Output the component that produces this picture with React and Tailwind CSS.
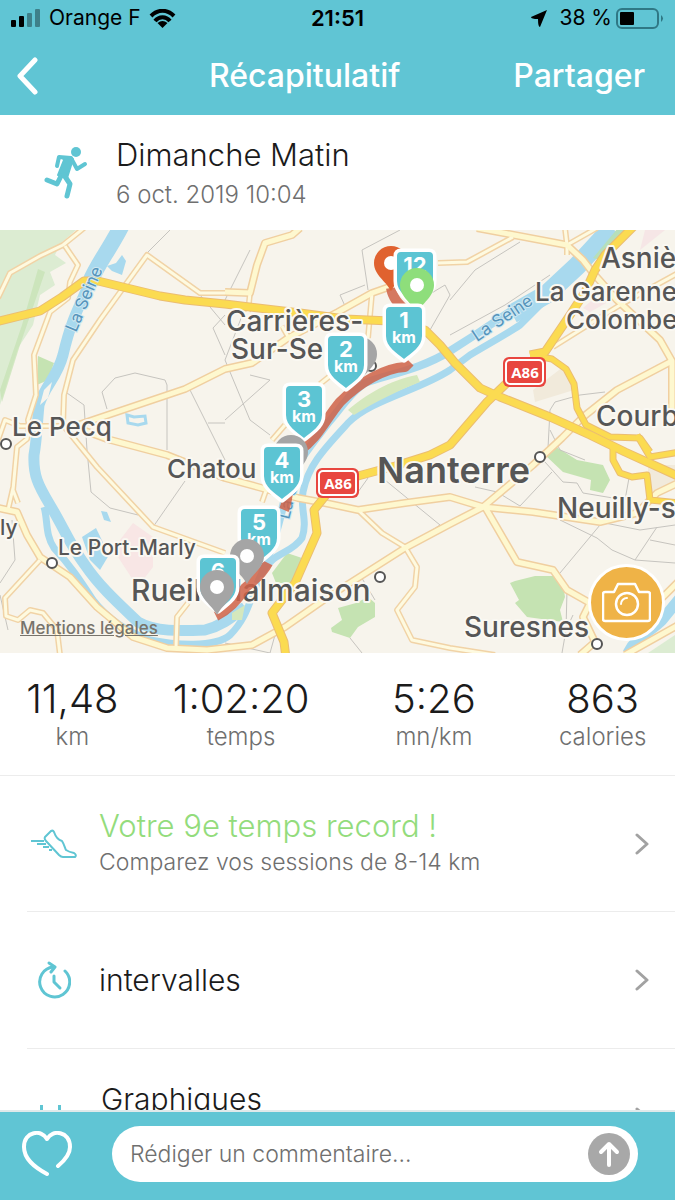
import React, { useState } from 'react';

const majorRoads = [
  'M-5 92 L40 81 L62 67 L84 51 L98 51 L160 66 L185 70 L225 74 L300 83 L345 89 L390 91 L425 100 L440 115 L455 133 L480 158 L500 167 L550 187 L590 205 L625 222 L680 247',
  'M635 -5 L605 25 L595 40 L585 62 L570 85 L545 122 L530 125',
  'M543 123 L513 147 L487 172 L450 215 L430 225 L395 236 L358 246 L330 260 L314 280 L317 303 L295 353 L272 383 L284 412 L286 428',
];

const rampRoads = [
  'M536 126 L552 129 L566 139 L574 154 L577 178 L586 195 L610 207 L640 208 L650 222',
  'M613 214 L613 230 L620 243 L632 247 L647 245 L650 270 L680 273',
  'M637 205 L650 227 L680 222',
];

const minorRoads = [
  'M-2 68 L10 43 L40 26 L63 15 L84 -2',
  'M65 16 L78 35 L70 52 L68 68 L50 82 L34 125 L36 165 L28 190 L30 200',
  'M-2 210 L5 190 L20 196 L75 196',
  'M225 63 L200 63 L147 25 L100 90 L73 130 L64 165 L63 195 L97 237 L153 297 L225 323',
  'M250 63 L248 82 M372 63 L368 108 M290 110 L282 96',
  'M40 330 L5 368 L6 386 L18 390 L30 380 L43 383 L57 400 L60 425',
  'M29 198 L27 209 L17 217 L13 260 L18 273 M13 258 L8 280',
  'M188 373 L177 387 L176 418',
  'M358 280 L382 303 L405 317 L417 337 L415 357 L397 380 L412 410 L450 418 L495 425',
  'M438 33 L467 32 L513 7 M565 -2 L567 15 L597 -2 M567 15 L567 25',
  'M553 117 L620 75 L680 42',
  'M272 210 L285 195 M320 154 L330 146 M262 272 L268 255',
];

const mainRoads = [
  'M75 196 L185 159 L225 139 L252 133 L288 108 L338 82 L372 63 L392 56',
  'M225 62 L250 63 L257 35 L265 13 L292 5 L300 -2',
  'M80 199 L107 209 L167 225 L225 248 L258 257 L298 268 L325 273 L358 280 L405 273 L450 267 L483 277 L533 282 L600 292 L637 283 L657 263 L680 252',
  'M-2 278 L17 282 L27 305 L40 327 L70 347 L97 377 L133 407 L167 418 L207 420 L252 415 L285 397 L328 367 L405 318 L450 294 L483 277 L533 235 L562 208 L583 187 L617 160 L672 131',
  'M485 277 L517 332 L553 340 L567 360 L590 373 L583 387 L595 412 L580 425',
  'M477 -2 L567 15 L583 30 L593 43 L617 70 L660 110 L672 131 L672 183',
  'M625 425 L680 394 M660 370 L680 350',
];

const footPaths = [
  'M170 0 L147 23 M200 65 L225 95 M225 85 L213 98 L225 125',
  'M107 179 L102 162 L115 148 L135 143 L165 150 L167 155 L167 220',
  'M67 163 L84 175 L87 220 L91 262 L110 278 L138 285',
  'M185 251 L153 297 M190 160 L225 230 M208 193 L225 193',
  'M225 70 L250 20 M250 65 L225 130 L250 190 L270 205 M225 190 L270 150 L250 145',
  'M362 20 L400 0 M362 20 L368 60 M365 55 L340 65 L345 76 M420 70 L445 55 L450 65 L430 100',
  'M450 70 L475 40 L520 12 M450 105 L505 75 L550 45',
  'M548 218 L550 180 L555 172 L580 165 L605 162 M550 200 L560 220 L585 230',
  'M358 262 L368 248 M385 250 L440 295 L405 318 M360 345 L375 370 M350 408 L362 423',
  'M475 257 L497 262 L520 276 L552 242 M545 232 L563 252 L577 253 L583 263 L625 270 L629 248',
  'M560 290 L597 308 L612 320 L635 330 L675 333 M600 295 L560 343 M657 297 L635 330 M600 292 L640 300 L675 295',
  'M675 315 L650 310 M567 360 L566 400 L573 385 M566 400 L562 423',
  'M12 290 L15 330 L0 353 M0 365 L8 400 M225 413 L270 423 L275 405',
];

const towns = [
  [6, 214],
  [52, 333],
  [371, 136],
  [380, 347],
  [540, 227],
  [597, 414],
];

const labels = [
  { text: 'Asniè', x: 601, y: 38, cls: 'text-[28px] font-medium' },
  { text: 'La Garenne', x: 535, y: 71, cls: 'text-[26px] font-medium' },
  { text: 'Colombe', x: 566, y: 99, cls: 'text-[26px] font-medium' },
  { text: 'Carrières-', x: 226, y: 101, cls: 'text-[28px] font-medium' },
  { text: 'Sur-Se', x: 231, y: 129, cls: 'text-[28px] font-medium' },
  { text: 'Le Pecq', x: 12, y: 206, cls: 'text-[26px] font-medium' },
  { text: 'Chatou', x: 167, y: 248, cls: 'text-[26px] font-medium' },
  { text: 'Nanterre', x: 377, y: 253, cls: 'text-[36px] font-semibold' },
  { text: 'Courb', x: 596, y: 196, cls: 'text-[28px] font-medium' },
  { text: 'Neuilly-s', x: 557, y: 288, cls: 'text-[28px] font-medium' },
  { text: 'Le Port-Marly', x: 58, y: 325, cls: 'text-[21px] font-medium' },
  { text: 'Rueil-Malmaison', x: 131, y: 371, cls: 'text-[30px] font-medium' },
  { text: 'Suresnes', x: 464, y: 407, cls: 'text-[28px] font-medium' },
];

const stats = [
  { value: '11,48', unit: 'km' },
  { value: '1:02:20', unit: 'temps' },
  { value: '5:26', unit: 'mn/km' },
  { value: '863', unit: 'calories' },
];

function KmPin({ x, y, n }) {
  return (
    <g transform={`translate(${x} ${y})`}>
      <path
        d="M-18 4 Q-18 0 -14 0 H14 Q18 0 18 4 V29 C18 40 7 46 0 52 C-7 46 -18 40 -18 29 Z"
        fill="#5cc4d3"
        stroke="#fff"
        strokeWidth="7"
        strokeLinejoin="round"
        paintOrder="stroke"
      />
      <text x="0" y="21" textAnchor="middle" fill="#fff" className="text-[22px] font-bold">{n}</text>
      <text x="0" y="36" textAnchor="middle" fill="#fff" className="text-[16px] font-bold">km</text>
    </g>
  );
}

function DropPin({ x, y, color }) {
  return (
    <g transform={`translate(${x} ${y})`}>
      <path d="M0 28 C-5 18 -17 12 -17 0 A17 17 0 0 1 17 0 C17 12 5 18 0 28 Z" fill={color} />
      <circle r="7" fill="#fff" />
    </g>
  );
}

function RoadSign({ x, y }) {
  return (
    <g transform={`translate(${x} ${y})`}>
      <rect width="43" height="30" rx="6" fill="#e8463f" />
      <rect x="3" y="3" width="37" height="24" rx="4" fill="none" stroke="#fff" strokeWidth="2" />
      <text x="22" y="21" textAnchor="middle" fill="#fff" className="font-['Open_Sans',sans-serif] text-[15px] font-bold">
        A86
      </text>
    </g>
  );
}

function RouteMap() {
  return (
    <svg viewBox="0 0 675 423" className="block w-full" role="img" aria-label="Carte du parcours">
      <rect width="675" height="423" fill="#f7f4ec" />

      {/* parcs et zones */}
      <g fill="#dcecd2">
        <path d="M0 0 H76 L60 14 L55 25 L66 33 L50 42 L55 55 L40 65 L33 95 L18 118 L0 175 Z" />
        <path d="M648 423 L675 405 V423 Z" />
      </g>
      <g fill="#c5e3b2">
        <path d="M38 39 L45 42 L32 80 L20 115 L2 172 L0 160 L22 95 Z" opacity="0.7" />
        <path d="M38 126 L54 133 L48 150 L37 155 Z" />
        <path d="M287 323 L302 328 L292 353 L276 353 L272 343 Z" />
        <path d="M338 378 L356 373 L368 367 L375 373 V387 L358 397 L350 408 L332 402 L331 398 L342 390 Z" />
        <path d="M545 225 L553 215 L577 230 L603 235 L610 250 L603 263 L590 260 L591 250 L563 242 Z" />
        <path d="M510 353 L515 351 L535 346 L555 346 L563 354 L565 367 L560 380 L563 392 L527 387 L515 373 L519 370 Z" />
      </g>
      <path d="M118 327 L120 310 L133 293 L153 307 V337 L143 350 H133 Z" fill="#f8e6e5" />
      <path d="M583 78 L597 66 L608 72 L590 82 Z M645 0 H665 L640 20 Z" fill="#f6e6e6" />
      <path d="M533 160 L563 137 L572 145 L574 160 L535 172 Z M648 235 H675 V255 L648 265 Z" fill="#f1eadb" />

      {/* sentiers */}
      <g fill="none" stroke="#c6c4bf" strokeWidth="1">
        {footPaths.map((d) => <path key={d} d={d} />)}
      </g>

      {/* la Seine */}
      <g fill="none" stroke="#a8d9ee" strokeLinejoin="round">
        <path d="M122 -5 C108 22 98 33 90 52 C75 85 70 95 63 125 C57 148 45 155 39 175 C37 195 37 208 34 225 C33 245 38 255 50 275 C65 300 70 315 85 335 C100 357 118 373 138 392 C155 402 180 401 205 400 C225 395 235 384 245 377" strokeWidth="11" />
        <path d="M122 -5 C108 22 98 33 90 52" strokeWidth="16" />
        <path d="M44 277 C48 290 45 305 54 318 C70 335 80 350 93 370 C110 392 130 403 150 410 C175 415 215 418 230 405 C250 385 250 365 262 343 C275 320 290 325 302 308 C308 290 300 280 303 262 C308 235 325 218 348 193 C370 170 420 160 450 140 L470 125 C490 113 505 105 520 95 L547 68 L580 35" strokeWidth="7" />
        <path d="M262 343 C275 310 280 290 288 255 C292 238 315 210 328 193 C340 180 350 162 365 153 C385 145 420 140 450 121 L475 105 L517 77" strokeWidth="8" />
        <path d="M512 84 L547 64 L577 36 L612 -2" strokeWidth="19" />
        <path d="M628 423 C635 408 650 402 662 390 L680 368" strokeWidth="11" />
      </g>
      <g fill="#a8d9ee">
        <path d="M107 36 L116 33 L122 25 L126 31 L122 45 L112 41 Z" />
        <path d="M101 281 L107 282 L111 292 L104 290 Z" />
        <path d="M82 307 L96 298 L109 325 L100 340 L90 330 Z" />
      </g>
      <path d="M44 160 L52 152 L48 168 L40 175 Z" fill="#f7f4ec" />
      <path d="M127 185 L134 187 L145 186 L146 193 L138 195 L128 193 Z" fill="none" stroke="#a8d9ee" strokeWidth="3" />
      <path d="M348 180 C365 165 390 150 417 145 L420 152 C395 162 375 172 354 185 Z" fill="#d5e8bd" />
      <path d="M593 28 L618 -2 H635 L600 30 Z" fill="#b6dfbb" />
      <path d="M232 383 L245 375 L242 390 H232 Z" fill="#d5e8bd" />

      {/* routes */}
      <g fill="none" strokeLinejoin="round">
        {minorRoads.map((d) => <path key={d} d={d} stroke="#f1d3a6" strokeWidth="6" />)}
        {mainRoads.map((d) => <path key={d} d={d} stroke="#f0cfa0" strokeWidth="8" />)}
        {minorRoads.map((d) => <path key={d} d={d} stroke="#fefae0" strokeWidth="3" />)}
        {mainRoads.map((d) => <path key={d} d={d} stroke="#fef8cf" strokeWidth="5" />)}
        {rampRoads.map((d) => <path key={d} d={d} stroke="#ebbd72" strokeWidth="7" />)}
        {majorRoads.map((d) => <path key={d} d={d} stroke="#ebbd72" strokeWidth="9" />)}
        {rampRoads.map((d) => <path key={d} d={d} stroke="#fbdb51" strokeWidth="5" />)}
        {majorRoads.map((d) => <path key={d} d={d} stroke="#fbdb51" strokeWidth="7" />)}
      </g>

      {towns.map(([x, y]) => (
        <circle key={x} cx={x} cy={y} r="5" fill="#fff" stroke="#555" strokeWidth="2" />
      ))}

      <g className="font-[Inter,sans-serif]" fill="#565656" stroke="#faf8f2" strokeWidth="4" strokeLinejoin="round" paintOrder="stroke">
        {labels.map((l) => <text key={l.text} x={l.x} y={l.y} className={l.cls}>{l.text}</text>)}
        <text x="0" y="305" className="text-[21px] font-medium">ly</text>
      </g>
      <g className="font-[Inter,sans-serif] text-[17px]" fill="#5594bb" stroke="#cfe8f2" strokeWidth="2" paintOrder="stroke">
        <text transform="translate(76 103) rotate(-67)">La Seine</text>
        <text transform="translate(477 112) rotate(-34)">La Seine</text>
        <text transform="translate(289 290) rotate(-76)">La S</text>
      </g>

      <RoadSign x="503" y="127" />
      <RoadSign x="316" y="238" />

      {/* parcours */}
      <g fill="none" stroke="#cf6248" strokeOpacity="0.85" strokeWidth="10" strokeLinejoin="round">
        <path d="M391 58 C393 70 400 75 410 85 M410 132 L405 137 C385 138 360 152 340 172 C325 190 318 208 300 220 C285 232 292 262 284 280" />
        <path d="M268 333 C262 345 252 352 245 358 C238 370 228 380 216 386" />
      </g>

      <g className="font-[Inter,sans-serif]">
        <DropPin x="391" y="33" color="#e0622f" />
        <KmPin x="415" y="22" n="12" />
        <DropPin x="417" y="55" color="#8ede7b" />
        <KmPin x="404" y="77" n="1" />
        <DropPin x="360" y="124" color="#a5a5a5" />
        <KmPin x="346" y="106" n="2" />
        <KmPin x="304" y="156" n="3" />
        <DropPin x="291" y="222" color="#a5a5a5" />
        <KmPin x="282" y="217" n="4" />
        <KmPin x="259" y="279" n="5" />
        <DropPin x="247" y="326" color="#a5a5a5" />
        <KmPin x="218" y="328" n="6" />
        <DropPin x="217" y="357" color="#a5a5a5" />
      </g>
    </svg>
  );
}

function StatusBar() {
  return (
    <div className="grid h-9 grid-cols-[1fr_auto_1fr] items-center px-[11px] text-[22px] text-black">
      <div className="flex items-center gap-2 text-[21px]">
        <svg width="30" height="18" viewBox="0 0 30 18">
          <rect x="0" y="11" width="5" height="7" rx="1" />
          <rect x="8" y="7" width="5" height="11" rx="1" />
          <rect x="16" y="4" width="5" height="14" rx="1" opacity="0.35" />
          <rect x="24" y="0" width="5" height="18" rx="1" opacity="0.35" />
        </svg>
        <span>Orange F</span>
        <svg width="27" height="19" viewBox="0 0 27 19">
          <g fill="none" stroke="#000" strokeWidth="4">
            <path d="M2 7 C9 0 18 0 25 7" />
            <path d="M6 12 C10 7 17 7 21 12" />
          </g>
          <path d="M8.500 14 Q13.500 10 18.500 14 L13.500 19 Z" />
        </svg>
      </div>
      <span className="font-semibold">21:51</span>
      <div className="flex items-center justify-end text-[21px]">
        <svg width="17" height="17" viewBox="0 0 17 17" className="mr-3">
          <path d="M16 0 L9 17 Q7 17 7 9 Q0 9 0 7 Z" />
        </svg>
        <span className="mr-1">38 %</span>
        <svg width="48" height="21" viewBox="0 0 48 21">
          <rect x="1" y="1" width="41" height="19" rx="5" fill="none" stroke="#2f7885" strokeWidth="2" />
          <rect x="4" y="4" width="14" height="13" rx="1" />
          <path d="M45 7 Q49 10.500 45 14 Z" fill="#2f7885" />
        </svg>
      </div>
    </div>
  );
}

function Chevron() {
  return (
    <svg width="14" height="22" viewBox="0 0 14 22" fill="none" stroke="#a2a2a2" strokeWidth="3" strokeLinecap="round" strokeLinejoin="round">
      <path d="M2 2 L12 11 L2 20" />
    </svg>
  );
}

function ShoeIcon() {
  return (
    <svg width="46" height="30" viewBox="0 0 46 30" fill="none" stroke="#5fc5d3" strokeWidth="2" strokeLinejoin="round">
      <path d="M14 8 L20 2 Q22 1 23 3 C25 9 27 11 31 12 C33 15 34 19 35 21 Q38 23 43 24 Q46 26 44 28 H32 Q30 28 28 26 L15 12 Q13 10 14 8 Z" />
      <path d="M0 12 H13 M6 15 H15 M12 18 H18 M18 21 H21" />
    </svg>
  );
}

function IntervalIcon() {
  return (
    <svg width="34" height="38" viewBox="0 0 34 38" fill="none" stroke="#5fc5d3" strokeWidth="3" strokeLinecap="round" strokeLinejoin="round">
      <path d="M28 10 A15 15 0 1 1 16 6" />
      <path d="M12 2 L18 6 L14 11" />
      <path d="M17 15 V21 L23 27" />
    </svg>
  );
}

function ChartIcon() {
  return (
    <svg width="34" height="34" viewBox="0 0 34 34" fill="#5fc5d3">
      <rect x="3" y="0" width="3" height="30" />
      <rect x="21" y="0" width="3" height="30" />
      <rect x="12" y="12" width="3" height="18" />
    </svg>
  );
}

export default function App() {
  const [comment, setComment] = useState('');

  return (
    <div className="flex h-screen flex-col overflow-hidden bg-white font-[Inter,sans-serif] text-[#1b1b1b]">
      <header className="shrink-0 bg-[#60c5d4]">
        <StatusBar />
        <nav className="flex h-[79px] items-center pr-[30px] text-[32px] font-medium text-white">
          <button type="button" aria-label="Retour" className="w-24 pl-4">
            <svg width="23" height="38" viewBox="0 0 23 38" fill="none" stroke="#fff" strokeWidth="5" strokeLinecap="round" strokeLinejoin="round">
              <path d="M19 3 L4 19 L19 35" />
            </svg>
          </button>
          <h1 className="flex-1 text-center">Récapitulatif</h1>
          <button type="button">Partager</button>
        </nav>
      </header>

      <main className="min-h-0 flex-1 overflow-y-auto [scrollbar-width:none]">
        <section className="flex h-[115px] items-center pl-11">
          <svg width="44" height="54" viewBox="0 0 44 54" fill="none" stroke="#5fc5d3" strokeLinecap="round" strokeLinejoin="round">
            <circle cx="32" cy="6" r="5" fill="#5fc5d3" stroke="none" />
            <path d="M13 20 L15 11 L27 12 L33 23 L41 18" strokeWidth="4" />
            <path d="M18 11 L29 13 L23 32 L14 29 L20 14 Z" fill="#5fc5d3" strokeWidth="2" />
            <path d="M17 30 L13 38 L3 34" strokeWidth="5" />
            <path d="M20 29 L26 38 L23 50" strokeWidth="5" />
          </svg>
          <div className="ml-7 pt-1">
            <h2 className="text-[31px] leading-10 font-light">Dimanche Matin</h2>
            <p className="text-[24px] leading-10 font-light text-[#6f6f6f]">6 oct. 2019 10:04</p>
          </div>
        </section>

        <section className="relative">
          <RouteMap />
          <a href="#mentions" className="absolute bottom-3 left-5 text-[17px] font-medium text-[#77736b] underline">
            Mentions légales
          </a>
          <button
            type="button"
            aria-label="Ajouter une photo"
            className="absolute right-[10px] bottom-3 flex size-[77px] items-center justify-center rounded-full border-[3px] border-white bg-[#efb347]"
          >
            <svg width="49" height="41" viewBox="0 0 49 41" fill="none" stroke="#fff" strokeWidth="2.500" strokeLinejoin="round">
              <path d="M3 10 H12 L16 2 H33 L37 10 H46 Q48 10 48 12 V37 Q48 39 46 39 H3 Q1 39 1 37 V12 Q1 10 3 10 Z" />
              <circle cx="25" cy="22" r="11" />
              <path d="M19 22 A6 6 0 0 1 25 16" strokeWidth="2" strokeLinecap="round" />
            </svg>
          </button>
        </section>

        <section className="grid h-[123px] grid-cols-[3fr_4fr_4fr_3fr] border-b border-[#ececec] pt-6 text-center">
          {stats.map((s) => (
            <div key={s.unit}>
              <div className="text-[40px] leading-11 font-light">{s.value}</div>
              <div className="text-[24px] leading-8 font-light text-[#6f6f6f]">{s.unit}</div>
            </div>
          ))}
        </section>

        <ul>
          <li className="ml-[27px] border-b border-[#ececec]">
            <button type="button" className="flex h-[135px] w-full items-center pr-[26px] text-left">
              <span className="flex w-[72px] shrink-0 pl-1"><ShoeIcon /></span>
              <span className="flex-1 pb-1 font-light">
                <span className="block text-[31px] leading-10 text-[#93dc7c]">Votre 9e temps record !</span>
                <span className="block text-[23px] leading-8 text-[#6f6f6f]">Comparez vos sessions de 8-14 km</span>
              </span>
              <Chevron />
            </button>
          </li>
          <li className="ml-[27px] border-b border-[#ececec]">
            <button type="button" className="flex h-[136px] w-full items-center pr-[26px] text-left">
              <span className="flex w-[72px] shrink-0 pl-[10px]"><IntervalIcon /></span>
              <span className="flex-1 text-[30px] font-light">intervalles</span>
              <Chevron />
            </button>
          </li>
          <li className="ml-[27px]">
            <button type="button" className="flex h-[136px] w-full items-start pr-[26px] text-left">
              <span className="mt-14 flex w-[74px] shrink-0 pl-[10px]"><ChartIcon /></span>
              <span className="mt-[30px] flex-1 text-[30px] leading-10 font-light">Graphiques</span>
              <span className="mt-[58px]"><Chevron /></span>
            </button>
          </li>
        </ul>
      </main>

      <footer className="flex h-[90px] shrink-0 items-center border-t-2 border-[#dfe9ea] bg-[#60c5d4] pr-[37px] pb-1 pl-[22px]">
        <button type="button" aria-label="J'aime">
          <svg width="50" height="46" viewBox="0 0 50 46" fill="none" stroke="#fff" strokeWidth="4" strokeLinecap="round" strokeLinejoin="round">
            <path d="M25 43 C12 36 2 28 2 16 C2 0 20 -2 25 8 C30 -2 48 0 48 16 C48 24 42 30 36 35" />
          </svg>
        </button>
        <form className="ml-10 flex h-14 flex-1 items-center rounded-full bg-white pr-2 pl-[18px]" onSubmit={(e) => e.preventDefault()}>
          <input
            type="text"
            aria-label="Commentaire"
            placeholder="Rédiger un commentaire..."
            value={comment}
            onChange={(e) => setComment(e.target.value)}
            className="min-w-0 flex-1 bg-transparent text-[23px] font-light outline-none placeholder:text-[#6f6f6f]"
          />
          <button type="submit" aria-label="Envoyer" className="flex size-[42px] items-center justify-center rounded-full bg-[#a8a8a8]">
            <svg width="22" height="26" viewBox="0 0 22 26" fill="none" stroke="#fff" strokeWidth="4" strokeLinecap="round" strokeLinejoin="round">
              <path d="M11 24 V3 M3 11 L11 3 L19 11" />
            </svg>
          </button>
        </form>
      </footer>
    </div>
  );
}
